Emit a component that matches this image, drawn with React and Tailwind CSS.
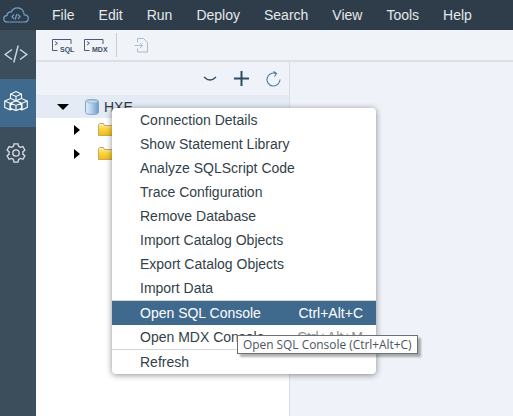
import React from "react";

const topMenu = ["File", "Edit", "Run", "Deploy", "Search", "View", "Tools", "Help"];

const menuItems = [
  { label: "Connection Details" },
  { label: "Show Statement Library" },
  { label: "Analyze SQLScript Code" },
  { label: "Trace Configuration" },
  { label: "Remove Database" },
  { label: "Import Catalog Objects" },
  { label: "Export Catalog Objects" },
  { label: "Import Data", divider: true },
  { label: "Open SQL Console", shortcut: "Ctrl+Alt+C", active: true },
  { label: "Open MDX Console", shortcut: "Ctrl+Alt+M", divider: true },
  { label: "Refresh" },
];

const CloudIcon = () => (
  <svg width="26" height="16" viewBox="0 0 26 16" fill="none" stroke="#6fa3cf" strokeWidth="1.2">
    <path d="M5 15h16c2.500 0 4.300-1.500 4.300-3.600 0-2.200-1.700-3.600-4-3.600C20.800 3.500 18 .8 14.500.8c-2.900 0-5.300 1.700-6.200 4.200-2.500-.4-4.300 1.300-4.300 3.400C2 8.700.7 10 .7 11.700.7 13.700 2.500 15 5 15z" />
    <path d="M11 7.500L9 9.700l2 2.200M15 7.500l2 2.200-2 2.200M13.800 7l-1.600 5.500" />
  </svg>
);

const CodeIcon = () => (
  <svg width="24" height="18" viewBox="0 0 24 18" fill="none" stroke="#cfdbe4" strokeWidth="1.400">
    <path d="M8 4.500L1.200 9.500 8 14.500M16 4.500l6.800 5-6.800 5M14.200.5L9.800 17.500" />
  </svg>
);

const CubesIcon = () => (
  <svg width="24" height="20" viewBox="0 0 24 20" fill="none" stroke="#ffffff" strokeWidth="1.100">
    <path d="M12 .6l5.500 2.400v4.400L12 9.800 6.500 7.400V3zM6.500 3L12 5.400 17.500 3M12 5.400v4.400" />
    <path d="M6 7.800L.7 10v6.400L6 18.800l2-.9M.7 10L6 12.300v6.500" />
    <path d="M18 7.800l5.300 2.200v6.400L18 18.800l-2-.9M23.300 10L18 12.300v6.500" />
    <path d="M12 9.800l5.500 2.400v5.400L12 19.500l-5.500-1.900v-5.400zM6.500 12.200l5.500 2.300 5.500-2.300M12 14.500v5" />
  </svg>
);

const GearIcon = () => (
  <svg width="20" height="20" viewBox="0 0 20 20" fill="none" stroke="#d5dfe7" strokeWidth="1.300">
    <path d="M8 .8h4l.6 2.600 1.700 1 2.600-.8 2 3.400-2 1.800v2.300l2 1.800-2 3.400-2.600-.8-1.700 1-.6 2.700H8l-.6-2.700-1.700-1-2.600.8-2-3.400 2-1.800V8.800l-2-1.800 2-3.400 2.600.8 1.700-1z" />
    <circle cx="10" cy="10" r="3.200" />
  </svg>
);

const ConsoleIcon = ({ label }) => (
  <div className="relative h-[13px] w-[20px]">
    <svg width="20" height="13" viewBox="0 0 20 13" fill="none" className="absolute left-0 top-0">
      <path d="M5.500 11.500H.5V.5h18.500V5" stroke="#4b5878" />
      <path d="M3 2.500l2.500 1.800L3 6" stroke="#4b5878" />
    </svg>
    <span className="absolute left-[8px] top-[7px] text-[7px] leading-[7px] font-bold text-[#3a5068]">{label}</span>
  </div>
);

const ImportIcon = () => (
  <svg width="15" height="15" viewBox="0 0 15 15" fill="none" stroke="#a9bccb">
    <path d="M3.500 4.500V.5h6l4 4v9.500h-10V10.500" />
    <path d="M.5 7.500h8M6 5l2.500 2.500L6 10" />
  </svg>
);

const Database = () => (
  <svg width="14" height="16" viewBox="0 0 14 16">
    <defs>
      <linearGradient id="db" x1="0" x2="1" y1="0" y2="0">
        <stop offset="0" stopColor="#e3eef8" />
        <stop offset="0.45" stopColor="#b6d2ea" />
        <stop offset="1" stopColor="#6b9cc6" />
      </linearGradient>
    </defs>
    <path d="M.5 2.500C.5 1.300 3 .5 7 .5s6.500.8 6.500 2v11c0 1.200-2.500 2-6.500 2s-6.500-.8-6.500-2z" fill="url(#db)" stroke="#7fa3c0" />
    <ellipse cx="7" cy="2.600" rx="5.500" ry="1.500" fill="#c5daec" stroke="#8fb6d8" strokeWidth="0.8" />
  </svg>
);

const Folder = () => (
  <svg width="15" height="13" viewBox="0 0 15 13">
    <defs>
      <linearGradient id="folder" x1="0" x2="0" y1="0" y2="1">
        <stop offset="0" stopColor="#fdf3c4" />
        <stop offset="0.4" stopColor="#fbd84a" />
        <stop offset="1" stopColor="#f2bb12" />
      </linearGradient>
    </defs>
    <path d="M.5 12.500V1.500l1-1h4l1 2h8v10z" fill="url(#folder)" stroke="#c8a96a" />
  </svg>
);

const TreeRow = () => (
  <div className="flex h-6 items-center pl-[38px]">
    <span className="h-0 w-0 border-y-[5px] border-l-[6px] border-y-transparent border-l-black" />
    <span className="ml-[18px] -mt-[2px]">
      <Folder />
    </span>
  </div>
);

const App = () => {
  return (
    <div className="relative flex h-[416px] w-[513px] flex-col overflow-hidden bg-white font-['Liberation_Sans',sans-serif] text-sm">
      <header className="flex h-[30px] shrink-0 items-center bg-[#2f3d4a]">
        <div className="flex w-[52px] justify-start pl-[3px]">
          <CloudIcon />
        </div>
        <nav className="flex gap-6 text-[#e3e8ec]">
          {topMenu.map((m) => (
            <span key={m}>{m}</span>
          ))}
        </nav>
      </header>

      <div className="flex min-h-0 flex-1">
        <aside className="flex w-9 shrink-0 flex-col bg-[#3c4d5c]">
          <div className="flex h-[49px] items-center justify-center pr-1 pb-[2px]">
            <CodeIcon />
          </div>
          <div className="flex h-12 items-center justify-center bg-[#3f6a8e] pr-1 pb-[5px]">
            <CubesIcon />
          </div>
          <div className="flex h-[48px] items-center justify-center pr-1 pt-[3px]">
            <GearIcon />
          </div>
        </aside>

        <div className="flex min-w-0 flex-1 flex-col">
          <div className="flex h-[32px] shrink-0 items-center border-b-2 border-[#dde1e7] bg-[#f0f3f8] pl-[16px]">
            <ConsoleIcon label="SQL" />
            <span className="ml-[12px]">
              <ConsoleIcon label="MDX" />
            </span>
            <span className="ml-[12px] h-6 w-px bg-[#c9ced4]" />
            <span className="ml-[17px]">
              <ImportIcon />
            </span>
          </div>

          <div className="flex min-h-0 flex-1">
            <section className="w-[254px] shrink-0 border-r border-[#d9dde3]">
              <div className="flex h-[33px] items-center justify-end gap-[17px] bg-[#eff2f8] pr-[8px] text-[#2f5273]">
                <svg width="14" height="6" viewBox="0 0 14 6" fill="none" stroke="#2f4a63" strokeWidth="1.300">
                  <path d="M1 1c2 2 4 3 6 3s4-1 6-3" />
                </svg>
                <svg width="15" height="15" viewBox="0 0 15 15" fill="none" stroke="#2f4a63" strokeWidth="2">
                  <path d="M7.500 0v15M0 7.500h15" />
                </svg>
                <svg width="15" height="16" viewBox="0 0 15 16" fill="none" stroke="#4a7ba3" strokeWidth="1.100">
                  <path d="M10 2.500A6.500 6.500 0 1 0 14 8.500M7.500 .5L10.500 2.500 8.500 5.500" />
                </svg>
              </div>
              <div className="flex h-[23px] items-center bg-[#e4ebf4] pl-[21px]">
                <span className="h-0 w-0 border-x-[6px] border-t-[6px] border-x-transparent border-t-black" />
                <span className="ml-[16px]">
                  <Database />
                </span>
                <span className="ml-[5px] text-[#2b3a47]">HXE</span>
              </div>
              <TreeRow />
              <TreeRow />
            </section>
            <section className="flex-1 bg-[#eff2f8]" />
          </div>
        </div>
      </div>

      <div className="absolute left-[112px] top-[108px] w-[264px] rounded-[4px] bg-white text-[#333f4a] shadow-[0_1px_6px_rgba(0,0,0,0.45)]">
        {menuItems.map((item) => (
          <div
            key={item.label}
            className={`flex items-center justify-between pl-7 pr-[13px] ${item.divider ? "h-[25px] border-b border-[#d5d5d5]" : "h-6"} ${item.active ? "bg-[#3f6a8e] text-white" : ""}`}
          >
            <span>{item.label}</span>
            {item.shortcut && <span className={item.active ? "text-white" : "text-[#8a949c]"}>{item.shortcut}</span>}
          </div>
        ))}
      </div>

      <div className="absolute left-[237px] top-[335px] flex h-[19px] w-[181px] items-center whitespace-nowrap border border-[#6f6f6f] bg-white pl-[5px] font-['Open_Sans',sans-serif] text-[11.9px] text-[#4a5560] shadow-[3px_3px_2px_rgba(0,0,0,0.3)]">
        Open SQL Console (Ctrl+Alt+C)
      </div>
    </div>
  );
};

export default App;
